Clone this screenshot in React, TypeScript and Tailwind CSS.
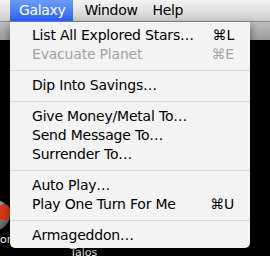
import React from "react";

type Item = { label: string; shortcut?: string; disabled?: boolean } | "sep";

const items: Item[] = [
  { label: "List All Explored Stars…", shortcut: "⌘L" },
  { label: "Evacuate Planet", shortcut: "⌘E", disabled: true },
  "sep",
  { label: "Dip Into Savings…" },
  "sep",
  { label: "Give Money/Metal To…" },
  { label: "Send Message To…" },
  { label: "Surrender To…" },
  "sep",
  { label: "Auto Play…" },
  { label: "Play One Turn For Me", shortcut: "⌘U" },
  "sep",
  { label: "Armageddon…" },
];

export default function App() {
  return (
    <div
      className="relative w-[270px] h-[256px] overflow-hidden bg-black"
      style={{ fontFamily: '"DejaVu Sans", sans-serif' }}
    >
      {/* menubar */}
      <div className="h-[22px] flex items-stretch pl-[10px] text-[14px] tracking-[-0.35px] text-black bg-gradient-to-b from-[#f4f4f4] via-[#e2e2e2] to-[#cdcdcd] border-b border-[#8a8a8a]">
        <div className="pl-[9px] pr-[8px] flex items-center text-white bg-gradient-to-b from-[#6a9cf7] to-[#2d63ea]">Galaxy</div>
        <div className="pl-[11px] pr-[7px] flex items-center">Window</div>
        <div className="px-[8px] flex items-center">Help</div>
      </div>
      {/* window title strip behind */}
      <div className="h-[18px] bg-gradient-to-b from-[#bdbdbd] to-[#9a9a9a]" />

      {/* desktop icons behind */}
      <div className="absolute left-[-20px] top-[200px] w-[30px] h-[30px] rounded-full bg-gradient-to-br from-[#b5b5b5] to-[#555] flex items-center justify-center">
        <div className="w-[16px] h-[16px] rounded-full bg-[#d13a1a] ml-[18px] mb-[6px]" />
      </div>
      <div className="absolute left-0 top-[234px] text-white text-[11px] leading-none">or</div>
      <div className="absolute left-[70px] top-[247px] text-white text-[11px] leading-none">Talos</div>

      {/* dropdown menu */}
      <div className="absolute left-[10px] top-[22px] w-[240px] bg-[#f3f3f3] rounded-b-[5px] shadow-[0_3px_8px_rgba(0,0,0,0.45)] pt-[4px] pb-[3px] text-[14px] tracking-[-0.2px]">
        {items.map((it, i) =>
          it === "sep" ? (
            <div key={i} className="h-[12px] flex items-center">
              <div className="w-full h-px bg-[#d9d9d9]" />
            </div>
          ) : (
            <div
              key={i}
              className={`h-[19px] flex items-center pl-[22px] pr-[16px] ${it.disabled ? "text-[#a3a3a3]" : "text-black"}`}
            >
              <span className="flex-1">{it.label}</span>
              {it.shortcut && <span>{it.shortcut}</span>}
            </div>
          )
        )}
      </div>
    </div>
  );
}
